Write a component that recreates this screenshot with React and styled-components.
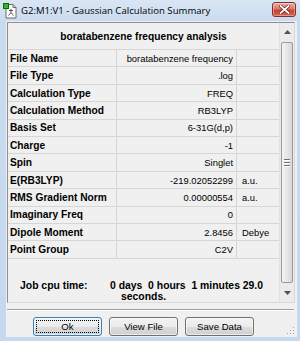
import { Fragment } from "react"
import styled, { createGlobalStyle } from "styled-components"

const GlobalStyle = createGlobalStyle`
  html, body {
    margin: 0;
    padding: 0;
    background: #ffffff;
  }
  body {
    font-family: "Liberation Sans", Arial, sans-serif;
  }
`

// Window chrome
const Window = styled.div`
  width: 300px;
  height: 341px;
  box-sizing: border-box;
  background: linear-gradient(#dae6f4 0px, #c9dbef 22px, #c6d8ee 100%);
  display: flex;
  flex-direction: column;
  padding: 0 3px 4px 6px;
  overflow: hidden;
`

const TitleBar = styled.div`
  height: 21px;
  display: flex;
  align-items: center;
  margin-left: -3px;
  flex-shrink: 0;
`

const TitleIcon = styled.svg`
  width: 15px;
  height: 16px;
  margin-right: 3px;
  flex-shrink: 0;
`

const TitleText = styled.span`
  font-family: "Open Sans", "Noto Sans", sans-serif;
  font-size: 9.6px;
  color: #000;
  flex: 1;
  white-space: nowrap;
`

const CloseButton = styled.div`
  width: 22px;
  height: 13px;
  margin-right: 1px;
  margin-top: -3px;
  border: 1px solid #7f3129;
  border-radius: 3px;
  background: linear-gradient(#eab0a4 0%, #d9786a 45%, #c8432f 55%, #d9604b 100%);
  display: flex;
  align-items: center;
  justify-content: center;
  box-shadow: inset 0 0 0 1px rgba(255, 255, 255, 0.35);
`

const Client = styled.div`
  flex: 1;
  background: #f0f0f0;
  display: flex;
  flex-direction: column;
  padding: 1px 2px 0 1px;
  position: relative;
`

// Scroll panel with the summary table
const ScrollPanel = styled.div`
  height: 281px;
  box-sizing: border-box;
  border: 1px solid #8a8d93;
  border-right-color: #d9d9d9;
  border-bottom-color: #d9d9d9;
  display: flex;
`

const PanelContent = styled.div`
  flex: 1;
  display: flex;
  flex-direction: column;
`

const Header = styled.div`
  height: 27px;
  display: flex;
  align-items: center;
  justify-content: center;
  font-weight: bold;
  font-size: 10.2px;
  color: #000;
  border-bottom: 1px solid #d6d6d6;
  box-sizing: border-box;
`

const Grid = styled.div`
  display: grid;
  grid-template-columns: 109px 120px 1fr;
  grid-auto-rows: 17.42px;
`

const Cell = styled.div`
  border-bottom: 1px solid #d6d6d6;
  border-right: ${p => (p.$last ? "none" : "1px solid #d6d6d6")};
  display: flex;
  align-items: center;
  justify-content: ${p => (p.$align === "right" ? "flex-end" : "flex-start")};
  padding: ${p => (p.$align === "right" ? "0 3px 0 0" : p.$unit ? "0 0 0 5px" : "0 0 0 2px")};
  font-size: ${p => (p.$bold ? "10.2px" : "9.4px")};
  font-weight: ${p => (p.$bold ? "bold" : "normal")};
  color: #000;
  white-space: nowrap;
  overflow: hidden;
`

const CpuBlock = styled.div`
  padding: 21px 0 0 12px;
  display: flex;
  font-weight: bold;
  font-size: 10.4px;
  color: #000;
  line-height: 11px;
`

const CpuLabel = styled.div`
  width: 90px;
`

const CpuValue = styled.div`
  white-space: pre;
`

const CpuWrap = styled.div`
  padding-left: 11px;
`

const Scrollbar = styled.div`
  width: 14px;
  display: flex;
  flex-direction: column;
  align-items: center;
  background: #ebebeb;
  border-left: 1px solid #e2e2e2;
`

const ArrowBox = styled.div`
  height: 18px;
  width: 100%;
  display: flex;
  align-items: center;
  justify-content: center;
`

const Thumb = styled.div`
  flex: 1;
  width: 12px;
  box-sizing: border-box;
  border: 1px solid #9a9a9a;
  border-radius: 2px;
  background: linear-gradient(90deg, #f4f4f4, #e6e6e6 50%, #d8d8d8);
  display: flex;
  flex-direction: column;
  align-items: center;
  justify-content: center;
  gap: 2px;
  margin: 1px 0;
`

const GripLine = styled.div`
  width: 6px;
  height: 1px;
  background: #6f6f6f;
  box-shadow: 0 1px 0 #fff;
`

const Separator = styled.div`
  margin-top: 6px;
  margin-right: 1px;
  border-top: 1px solid #a0a0a0;
  border-bottom: 1px solid #ffffff;
`

const ButtonRow = styled.div`
  display: flex;
  gap: 7px;
  padding-left: 26px;
  margin-top: 6px;
`

const Button = styled.button`
  width: 69px;
  height: 19px;
  box-sizing: border-box;
  border: 1px solid ${p => (p.$default ? "#3c7fb1" : "#707070")};
  border-radius: 3px;
  background: linear-gradient(#f2f2f2 0%, #ebebeb 50%, #dddddd 51%, #cfcfcf 100%);
  font-family: "Liberation Sans", Arial, sans-serif;
  font-size: 9.6px;
  color: #000;
  padding: 0;
  position: relative;
  box-shadow: inset 0 0 0 1px rgba(255, 255, 255, 0.6);

  ${p =>
    p.$default &&
    `
    &::after {
      content: "";
      position: absolute;
      inset: 2px;
      border: 1px dotted #000;
      border-radius: 1px;
    }
  `}
`

const ResizeGrip = styled.svg`
  position: absolute;
  right: 2px;
  bottom: 2px;
  width: 10px;
  height: 10px;
`

const rows = [
  ["File Name", "boratabenzene frequency", ""],
  ["File Type", ".log", ""],
  ["Calculation Type", "FREQ", ""],
  ["Calculation Method", "RB3LYP", ""],
  ["Basis Set", "6-31G(d,p)", ""],
  ["Charge", "-1", ""],
  ["Spin", "Singlet", ""],
  ["E(RB3LYP)", "-219.02052299", "a.u."],
  ["RMS Gradient Norm", "0.00000554", "a.u."],
  ["Imaginary Freq", "0", ""],
  ["Dipole Moment", "2.8456", "Debye"],
  ["Point Group", "C2V", ""],
]

const App = () => {
  return (
    <>
      <GlobalStyle />
      <Window>
        <TitleBar>
          <TitleIcon viewBox="0 0 15 16">
            <path d="M3 1.5h7l3 3v10.5H3z" fill="#fff" stroke="#6b6b6b" />
            <path d="M10 1.5v3h3" fill="none" stroke="#6b6b6b" />
            <path d="M8 6v3.5M8 9.5l-2.5 3M8 9.5l2.5 3M6 7.5h4" stroke="#555" strokeWidth="1" fill="none" />
            <rect x="0.5" y="0.5" width="5" height="5" fill="#22c322" stroke="#0a6b0a" />
          </TitleIcon>
          <TitleText>G2:M1:V1 - Gaussian Calculation Summary</TitleText>
          <CloseButton>
            <svg width="11" height="9" viewBox="0 0 11 9">
              <path d="M1.5 1L9.5 8M9.5 1L1.5 8" stroke="#5a2018" strokeWidth="3.2" strokeLinecap="square" />
              <path d="M1.5 1L9.5 8M9.5 1L1.5 8" stroke="#fff" strokeWidth="1.8" strokeLinecap="square" />
            </svg>
          </CloseButton>
        </TitleBar>
        <Client>
          <ScrollPanel>
            <PanelContent>
              <Header>boratabenzene frequency analysis</Header>
              <Grid>
                {rows.map(([label, value, unit]) => (
                  <Fragment key={label}>
                    <Cell $bold>{label}</Cell>
                    <Cell $align="right">{value}</Cell>
                    <Cell $unit $last>{unit}</Cell>
                  </Fragment>
                ))}
              </Grid>
              <CpuBlock>
                <CpuLabel>Job cpu time:</CpuLabel>
                <CpuValue>
                  <div>0 days  0 hours  1 minutes 29.0</div>
                  <CpuWrap>seconds.</CpuWrap>
                </CpuValue>
              </CpuBlock>
            </PanelContent>
            <Scrollbar>
              <ArrowBox>
                <svg width="7" height="4" viewBox="0 0 7 4">
                  <path d="M0 4L3.5 0L7 4z" fill="#505050" />
                </svg>
              </ArrowBox>
              <Thumb>
                <GripLine />
                <GripLine />
                <GripLine />
              </Thumb>
              <ArrowBox>
                <svg width="7" height="4" viewBox="0 0 7 4">
                  <path d="M0 0L3.5 4L7 0z" fill="#505050" />
                </svg>
              </ArrowBox>
            </Scrollbar>
          </ScrollPanel>
          <Separator />
          <ButtonRow>
            <Button $default>Ok</Button>
            <Button>View File</Button>
            <Button>Save Data</Button>
          </ButtonRow>
          <ResizeGrip viewBox="0 0 10 10">
            <rect x="8" y="2" width="1" height="1" fill="#a0a0a0" />
            <rect x="5" y="5" width="1" height="1" fill="#a0a0a0" />
            <rect x="8" y="5" width="1" height="1" fill="#a0a0a0" />
            <rect x="2" y="8" width="1" height="1" fill="#a0a0a0" />
            <rect x="5" y="8" width="1" height="1" fill="#a0a0a0" />
            <rect x="8" y="8" width="1" height="1" fill="#a0a0a0" />
          </ResizeGrip>
        </Client>
      </Window>
    </>
  )
}

export default App
